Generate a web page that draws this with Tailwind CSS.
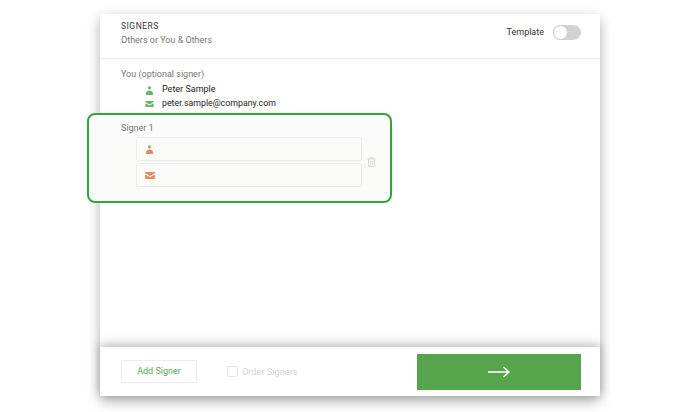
<!DOCTYPE html>
<html lang="en">
<head>
    <meta charset="UTF-8">
    <title>Signers</title>
    <script src="https://cdn.jsdelivr.net/npm/@tailwindcss/browser@4"></script>
</head>
<body class="bg-white w-[700px] h-[412px] overflow-hidden font-['Roboto',sans-serif]">

    <div class="ml-[100px] mt-[14px] w-[500px] h-[382px] bg-white flex flex-col shadow-[0_5px_12px_rgba(0,0,0,0.32)]">
        <!-- header -->
        <div class="h-[45px] shrink-0 border-b border-[#ececec] pl-[21px] pr-[19px] flex justify-between">
            <div>
                <div class="text-[8.5px] leading-[11px] mt-[7px] tracking-[0.5px] text-[#333]">SIGNERS</div>
                <div class="text-[9px] leading-[12px] mt-[2px] text-[#777]">Others or You &amp; Others</div>
            </div>
            <div class="flex items-center gap-[9px] mt-[-7px]">
                <span class="text-[9px] text-[#333]">Template</span>
                <span class="relative block w-[28px] h-[15px] rounded-full bg-[#d2d2d2]">
                    <span class="absolute left-0 top-0 w-[15px] h-[15px] rounded-full bg-white border border-[#ccc]"></span>
                </span>
            </div>
        </div>

        <!-- body -->
        <div class="flex-1">
            <div class="pl-[21px] pt-[9px]">
                <div class="text-[9px] leading-[12px] text-[#777]">You (optional signer)</div>
                <div class="flex items-center mt-[3px] h-[14px] pl-[25px]">
                    <svg class="w-[7px] h-[9px] fill-[#6bb26a]" viewBox="0 0 7 9"><circle cx="3.500" cy="1.800" r="1.600"/><path d="M0 9V7.500C0 5.500 1.800 4.500 3.500 4.500S7 5.500 7 7.500V9z"/></svg>
                    <span class="ml-[9px] text-[9px] text-[#222]">Peter Sample</span>
                </div>
                <div class="flex items-center h-[13px] pl-[24px]">
                    <svg class="w-[9px] h-[6px] fill-[#6bb26a]" viewBox="0 0 11 8"><path d="M0 0h11v1.400L5.500 4.600 0 1.400zM0 2.900l5.500 3.100L11 2.900V8H0z"/></svg>
                    <span class="ml-[8px] text-[8.800px] text-[#222]">peter.sample@company.com</span>
                </div>
            </div>

            <!-- signer box hangs over the left edge of the card -->
            <div class="ml-[-13px] mt-[3px] w-[305px] h-[90px] rounded-[8px] border-2 border-[#2ea83a] bg-[#fbfcfa] pt-[7px] pl-[32px]">
                <div class="text-[9px] leading-[12px] text-[#777]">Signer 1</div>
                <div class="flex items-center mt-[3px]">
                    <div class="flex flex-col gap-[2px] ml-[15px]">
                        <div class="w-[226px] h-[24px] rounded-[2px] border border-[#ececec] flex items-center pl-[9px]">
                            <svg class="w-[7px] h-[9px] fill-[#e4875a]" viewBox="0 0 7 9"><circle cx="3.500" cy="1.800" r="1.600"/><path d="M0 9V7.500C0 5.500 1.800 4.500 3.500 4.500S7 5.500 7 7.500V9z"/></svg>
                        </div>
                        <div class="w-[226px] h-[24px] rounded-[2px] border border-[#ececec] flex items-center pl-[8px]">
                            <svg class="w-[10px] h-[7px] fill-[#e4875a]" viewBox="0 0 11 8"><path d="M0 0h11v1.400L5.500 4.600 0 1.400zM0 2.900l5.500 3.100L11 2.900V8H0z"/></svg>
                        </div>
                    </div>
                    <svg class="w-[9px] h-[10px] ml-[5px] fill-none stroke-[#d8d8d8]" viewBox="0 0 9 10"><path d="M.5 2h8M3 2V.7h3V2M1.500 2v7.500h6V2M3.500 3.500v4.500M5.500 3.500v4.500"/></svg>
                </div>
            </div>
        </div>

        <!-- footer -->
        <div class="relative h-[49px] shrink-0 bg-white flex items-center pl-[21px] pr-[19px] shadow-[0_-3px_9px_rgba(0,0,0,0.26)]">
            <button class="w-[76px] h-[23px] rounded-[2px] border border-[#ececec] text-[9px] text-[#5ba85a]">Add Signer</button>
            <span class="ml-[30px] w-[11px] h-[11px] rounded-[2px] border border-[#e4e4e4]"></span>
            <span class="ml-[4px] text-[9.200px] text-[#d4d4d4]">Order Signers</span>
            <button class="ml-auto w-[164px] h-[36px] bg-[#56a44b] flex items-center justify-center">
                <svg class="w-[22px] h-[12px] fill-none stroke-white stroke-[1.5]" viewBox="0 0 22 12"><path d="M0 6h21M15.500 1l5.500 5-5.500 5"/></svg>
            </button>
        </div>
    </div>

</body>
</html>
